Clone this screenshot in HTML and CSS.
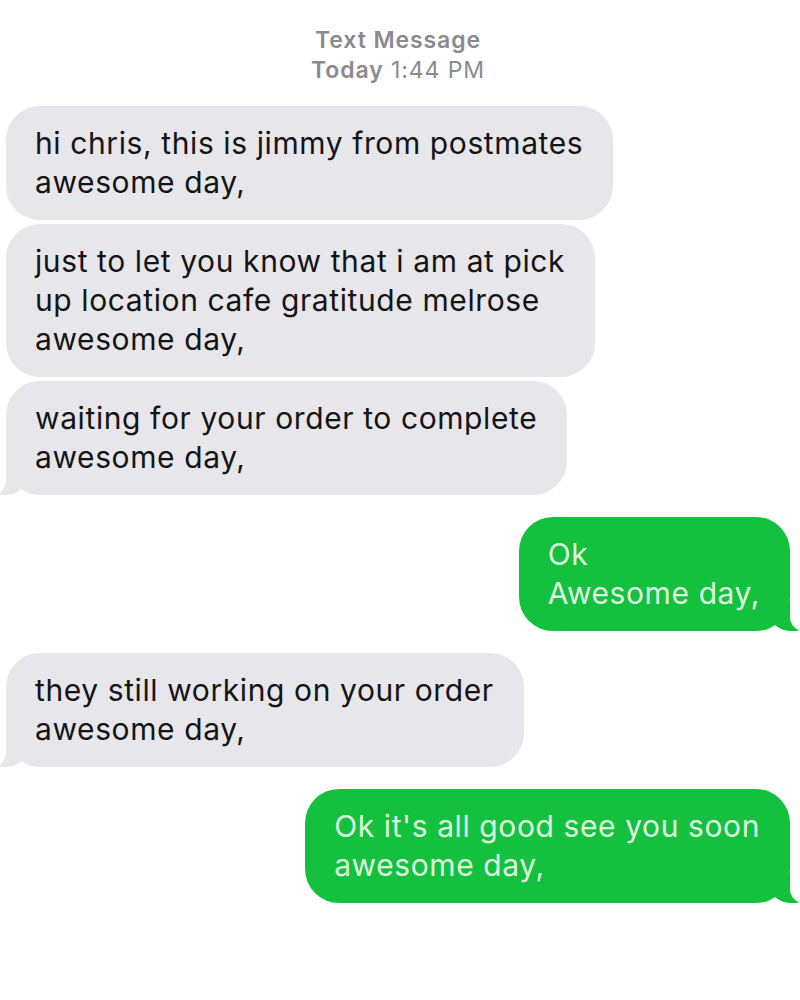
FILE: index.html
```html
<!DOCTYPE html>
<html lang="en">

<head>
    <meta charset="UTF-8">
    <meta name="viewport" content="width=device-width, initial-scale=1.0">
    <title>Text Message</title>
    <link rel="stylesheet" href="styles.css">
</head>

<body>

    <div class="thread">
        <div class="stamp">
            <div class="stamp-kind">Text Message</div>
            <div class="stamp-time"><b>Today</b> 1:44 PM</div>
        </div>

        <div class="group">
            <div class="msg them">hi chris, this is jimmy from postmates<br>awesome day,</div>
            <div class="msg them">just to let you know that i am at pick<br>up location cafe gratitude melrose<br>awesome day,</div>
            <div class="msg them tail">waiting for your order to complete<br>awesome day,</div>
        </div>

        <div class="group">
            <div class="msg me tail">Ok<br>Awesome day,</div>
        </div>

        <div class="group">
            <div class="msg them tail">they still working on your order<br>awesome day,</div>
        </div>

        <div class="group">
            <div class="msg me tail">Ok it's all good see you soon<br>awesome day,</div>
        </div>
    </div>

</body>

</html>
```

FILE: styles.css
```css
html,
body {
    margin: 0;
    padding: 0;
    background: #fff;
    font-family: 'Inter', 'Liberation Sans', sans-serif;
}

.thread {
    display: flex;
    flex-direction: column;
    gap: 22px;
    padding: 25px 10px 40px 6px;
}

.thread .stamp {
    margin-bottom: -1px;
}

/* Timestamp header */

.stamp {
    text-align: center;
    color: #8a8a8f;
    font-size: 23px;
    line-height: 30px;
    letter-spacing: 0.9px;
}

.stamp-kind {
    font-weight: 600;
}

.stamp-time b {
    font-weight: 600;
}

/* Bubbles */

.group {
    display: flex;
    flex-direction: column;
    gap: 4px;
}

.msg {
    position: relative;
    padding: 18px 30px 18px 29px;
    border-radius: 34px;
    font-size: 30px;
    line-height: 39px;
    letter-spacing: 0.6px;
    white-space: nowrap;
}

.them {
    align-self: flex-start;
    background: #e6e6eb;
    color: #141414;
}

.me {
    align-self: flex-end;
    background: #14c13f;
    color: #dff7e1;
}

/* Bubble tails */

.msg.tail::before,
.msg.tail::after {
    content: '';
    position: absolute;
    bottom: 0;
}

.them.tail::before {
    left: -8px;
    width: 30px;
    height: 30px;
    background: #e6e6eb;
    border-bottom-right-radius: 22px;
}

.them.tail::after {
    left: -14px;
    width: 14px;
    height: 30px;
    background: #fff;
    border-bottom-right-radius: 14px;
}

.me.tail::before {
    right: -8px;
    width: 30px;
    height: 30px;
    background: #14c13f;
    border-bottom-left-radius: 22px;
}

.me.tail::after {
    right: -14px;
    width: 14px;
    height: 30px;
    background: #fff;
    border-bottom-left-radius: 14px;
}
```
